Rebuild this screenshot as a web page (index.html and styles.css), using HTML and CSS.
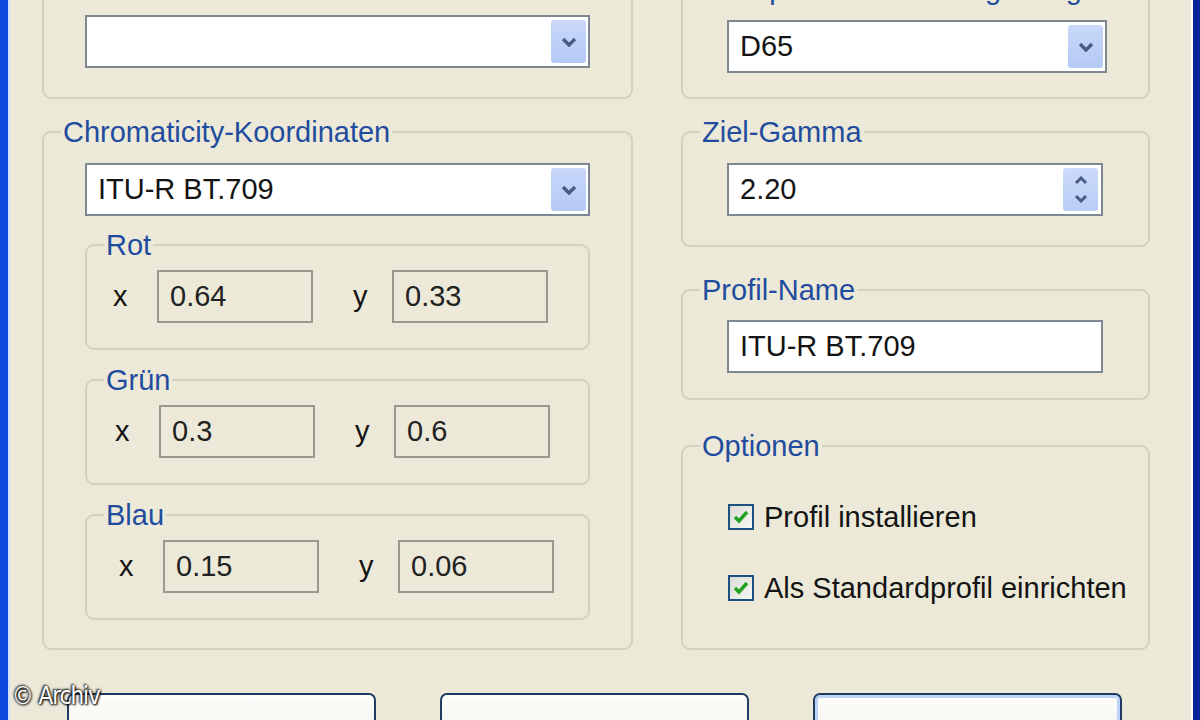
FILE: index.html
```html
<!DOCTYPE html>
<html lang="de">
<head>
    <meta charset="UTF-8">
    <meta name="viewport" content="width=device-width, initial-scale=1.0">
    <title>Farbprofil erstellen</title>
    <link rel="stylesheet" href="styles.css">
</head>
<body>
    <div class="window">
        <div class="columns">
            <div class="col">
                <fieldset class="group group-top">
                    <legend>Vorgabe-Farbraum</legend>
                    <div class="combo">
                        <span class="combo-text"></span>
                        <span class="drop-btn">
                            <svg width="16" height="10" viewBox="0 0 16 10"><polyline points="2,2 8,8 14,2" fill="none" stroke="#4a5b85" stroke-width="3.4"/></svg>
                        </span>
                    </div>
                </fieldset>

                <fieldset class="group group-chroma">
                    <legend>Chromaticity-Koordinaten</legend>
                    <div class="combo">
                        <span class="combo-text">ITU-R BT.709</span>
                        <span class="drop-btn">
                            <svg width="16" height="10" viewBox="0 0 16 10"><polyline points="2,2 8,8 14,2" fill="none" stroke="#4a5b85" stroke-width="3.4"/></svg>
                        </span>
                    </div>

                    <fieldset class="group sub sub-first">
                        <legend>Rot</legend>
                        <div class="coords">
                            <span class="axis">x</span>
                            <span class="field-ro">0.64</span>
                            <span class="axis axis-y">y</span>
                            <span class="field-ro">0.33</span>
                        </div>
                    </fieldset>

                    <fieldset class="group sub shift-1">
                        <legend>Grün</legend>
                        <div class="coords">
                            <span class="axis">x</span>
                            <span class="field-ro">0.3</span>
                            <span class="axis axis-y">y</span>
                            <span class="field-ro">0.6</span>
                        </div>
                    </fieldset>

                    <fieldset class="group sub shift-2">
                        <legend>Blau</legend>
                        <div class="coords">
                            <span class="axis">x</span>
                            <span class="field-ro">0.15</span>
                            <span class="axis axis-y">y</span>
                            <span class="field-ro">0.06</span>
                        </div>
                    </fieldset>
                </fieldset>
            </div>

            <div class="col col-right">
                <fieldset class="group group-top group-top-right">
                    <legend>Weißpunkt der Zielumgebung</legend>
                    <div class="combo">
                        <span class="combo-text">D65</span>
                        <span class="drop-btn">
                            <svg width="16" height="10" viewBox="0 0 16 10"><polyline points="2,2 8,8 14,2" fill="none" stroke="#4a5b85" stroke-width="3.4"/></svg>
                        </span>
                    </div>
                </fieldset>

                <fieldset class="group group-gamma">
                    <legend>Ziel-Gamma</legend>
                    <div class="combo spin">
                        <span class="combo-text">2.20</span>
                        <span class="spin-btns">
                            <svg width="14" height="9" viewBox="0 0 14 9"><polyline points="2,7 7,2 12,7" fill="none" stroke="#4a5b85" stroke-width="3"/></svg>
                            <svg width="14" height="9" viewBox="0 0 14 9"><polyline points="2,2 7,7 12,2" fill="none" stroke="#4a5b85" stroke-width="3"/></svg>
                        </span>
                    </div>
                </fieldset>

                <fieldset class="group group-name">
                    <legend>Profil-Name</legend>
                    <div class="text-field">ITU-R BT.709</div>
                </fieldset>

                <fieldset class="group group-options">
                    <legend>Optionen</legend>
                    <div class="check">
                        <span class="box">
                            <svg width="18" height="16" viewBox="0 0 18 16"><polyline points="3,8 7,12 15,3" fill="none" stroke="#21a121" stroke-width="3.4"/></svg>
                        </span>
                        <span>Profil installieren</span>
                    </div>
                    <div class="check">
                        <span class="box">
                            <svg width="18" height="16" viewBox="0 0 18 16"><polyline points="3,8 7,12 15,3" fill="none" stroke="#21a121" stroke-width="3.4"/></svg>
                        </span>
                        <span>Als Standardprofil einrichten</span>
                    </div>
                </fieldset>
            </div>
        </div>

        <div class="buttons">
            <button class="btn" type="button"></button>
            <button class="btn" type="button"></button>
            <button class="btn btn-default" type="button"></button>
        </div>
    </div>

    <div class="watermark">© Archiv</div>
</body>
</html>
```

FILE: styles.css
```css
* {
    box-sizing: border-box;
}

html, body {
    margin: 0;
    padding: 0;
}

body {
    position: relative;
    width: 1200px;
    height: 720px;
    overflow: hidden;
    background-color: #ece9d8;
    font-family: "Liberation Sans", Arial, sans-serif;
    font-size: 29px;
    color: #141414;
}

/* XP window frame, only the side borders are visible */
.window {
    height: 720px;
    padding: 0 43px 0 34px;
    border-left: 8px solid #0b48de;
    border-right: 7px solid #06239a;
    box-shadow: inset 2px 0 0 #cfe0f7, inset -2px 0 0 #f8f7f1;
    overflow: hidden;
}

.columns {
    display: grid;
    grid-template-columns: 591px 469px;
    column-gap: 48px;
    margin-top: -32px;
}

.col {
    display: flex;
    flex-direction: column;
}

/* group boxes */
.group {
    margin: 0;
    padding: 15px 41px 29px;
    min-width: 0;
    border: 2px solid #d4d1c1;
    border-radius: 9px;
}

.group legend {
    margin-left: -24px;
    padding: 0 2px;
    line-height: 32px;
    color: #1f4c9e;
}

.col-right .group {
    padding-left: 44px;
    padding-right: 44px;
}

.col-right .group legend {
    margin-left: -27px;
}

.group-top-right {
    margin-top: 5px;
    padding-bottom: 24px;
}

.group-chroma {
    margin-top: 17px;
    padding-bottom: 28px;
}

.group-gamma {
    margin-top: 17px;
}

.col-right .group-top-right {
    padding-right: 41px;
}

.col-right .group-gamma,
.col-right .group-name {
    padding-right: 45px;
}

.group-name {
    margin-top: 27px;
    padding-top: 14px;
    padding-bottom: 25px;
}

.group-options {
    flex: 1;
    margin-top: 30px;
    padding-top: 40px;
}

.sub {
    margin-top: 14px;
    padding: 9px 0 25px 26px;
}

.sub-first {
    margin-top: 13px;
}

.sub legend {
    margin-left: -9px;
}

.shift-1 .coords {
    padding-left: 2px;
}

.shift-2 .coords {
    padding-left: 6px;
}

/* inputs */
.combo,
.text-field {
    display: flex;
    align-items: center;
    height: 53px;
    background-color: #ffffff;
    border: 2px solid #7d8893;
}

.combo-text,
.text-field {
    padding-left: 11px;
}

.combo-text {
    flex: 1;
}

.drop-btn {
    display: flex;
    align-items: center;
    justify-content: center;
    width: 35px;
    height: 43px;
    margin-right: 2px;
    border-radius: 3px;
    background: linear-gradient(#c9d8fb, #b4c9f4);
}

.spin-btns {
    display: flex;
    flex-direction: column;
    align-items: center;
    justify-content: space-around;
    width: 35px;
    height: 43px;
    margin-right: 3px;
    padding: 3px 0;
    border-radius: 3px;
    background: linear-gradient(#cddbfb, #b8ccf5);
}

.coords {
    display: flex;
    align-items: center;
}

.axis {
    width: 44px;
}

.axis-y {
    width: 39px;
    margin-left: 40px;
}

.field-ro {
    display: flex;
    align-items: center;
    width: 156px;
    height: 53px;
    padding-left: 11px;
    border: 2px solid #9a998f;
    color: #222;
}

/* checkboxes */
.check {
    display: flex;
    align-items: center;
    gap: 10px;
    height: 30px;
    margin-left: 1px;
    white-space: nowrap;
}

.check + .check {
    margin-top: 41px;
}

.box {
    display: flex;
    flex-shrink: 0;
    align-items: center;
    justify-content: center;
    width: 26px;
    height: 26px;
    border: 2px solid #1c5180;
    background: linear-gradient(135deg, #dcdcd5, #f6f6f3);
}

/* bottom buttons, cut by the window edge */
.buttons {
    display: flex;
    gap: 64px;
    margin-top: 43px;
    padding-left: 25px;
}

.btn {
    width: 309px;
    height: 60px;
    border: 2px solid #1f3b63;
    border-radius: 7px;
    background: linear-gradient(#fdfdfb, #f1f0ea);
    box-shadow: inset 0 2px 0 #ffffff;
}

.btn-default {
    box-shadow: inset 0 0 0 3px #bcd3f6;
}

.watermark {
    position: absolute;
    left: 12px;
    top: 682px;
    font-family: "DejaVu Sans Condensed", "DejaVu Sans", sans-serif;
    font-size: 24px;
    letter-spacing: -1px;
    color: #ffffff;
    text-shadow: 0 0 3px #000000, 1px 1px 2px #000000, -1px -1px 2px #333333;
}
```
